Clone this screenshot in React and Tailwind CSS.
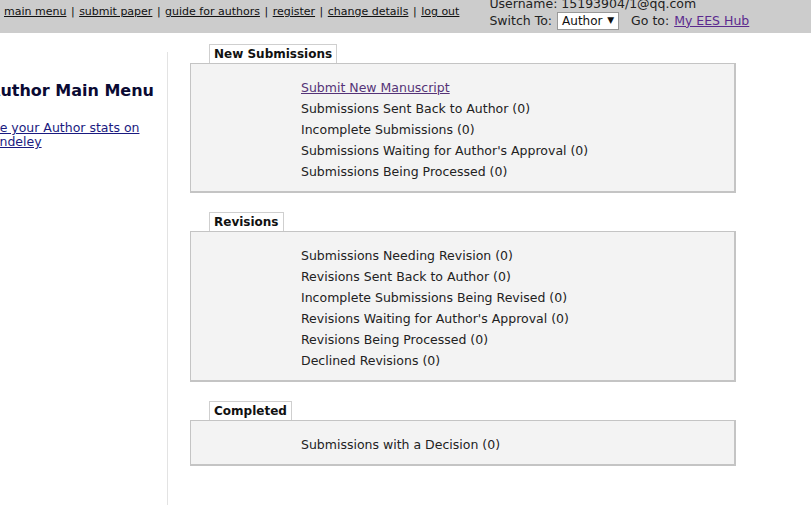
const NEW_SUBMISSIONS = [
  "Submissions Sent Back to Author (0)",
  "Incomplete Submissions (0)",
  "Submissions Waiting for Author's Approval (0)",
  "Submissions Being Processed (0)",
];

const REVISIONS = [
  "Submissions Needing Revision (0)",
  "Revisions Sent Back to Author (0)",
  "Incomplete Submissions Being Revised (0)",
  "Revisions Waiting for Author's Approval (0)",
  "Revisions Being Processed (0)",
  "Declined Revisions (0)",
];

const COMPLETED = ["Submissions with a Decision (0)"];

const NAV = ["main menu", "submit paper", "guide for authors", "register", "change details", "log out"];

function Panel({ title, children }) {
  return (
    <div className="mb-[19px]">
      <div className="ml-[19px] block h-[19px] w-fit border border-b-0 border-[#cfcfcf] bg-white px-[4px] text-[12px] font-bold leading-[18px] text-[#111]">
        {title}
      </div>
      <div className="border border-[#c4c4c4] border-b-2 border-r-2 bg-[#f3f3f3] pb-[9px] pl-[110px] pt-[13px]">
        {children}
      </div>
    </div>
  );
}

function Item({ children }) {
  return <div className="h-[21px] leading-[21px] text-[#222]">{children}</div>;
}

export default function App() {
  return (
    <div className="min-h-[520px] bg-white text-[12.5px] [font-family:'DejaVu_Sans',Verdana,sans-serif]">
      {/* top bar */}
      <div className="flex h-[33px] overflow-hidden bg-[#cccccc]">
        <div className="flex h-[25px] shrink-0 items-center whitespace-nowrap pl-[4px] text-[11px] text-[#111]">
          {NAV.map((n, i) => (
            <span key={n} className="whitespace-pre">
              <a className="underline">{n}</a>
              {i < NAV.length - 1 ? <span className="mx-px"> | </span> : ""}
            </span>
          ))}
        </div>
        <div className="ml-[30px] mt-[-4px] shrink-0 whitespace-nowrap text-[12.5px] text-[#222]">
          <div className="h-[15px] leading-[15px]">Username: 15193904/1@qq.com</div>
          <div className="flex h-[20px] items-center">
            <span>Switch To:</span>
            <div className="ml-[5px] flex h-[18px] w-[62px] items-center justify-between border border-[#999] bg-white px-[4px] text-[12px] text-[#111]">
              <span>Author</span>
              <span className="text-[9px]">▼</span>
            </div>
            <span className="ml-[12px]">Go to:</span>
            <a className="ml-[5px] text-[#5b2a8e] underline">My EES Hub</a>
          </div>
        </div>
      </div>

      <div className="flex">
        {/* sidebar */}
        <div className="mt-[19px] h-[453px] w-[168px] shrink-0 overflow-hidden border-r border-[#e3e3e3]">
          <div className="ml-[-12px] mt-[29px] whitespace-nowrap text-[16px] font-bold leading-[20px] text-[#0a0a33]">
            Author Main Menu
          </div>
          <div className="ml-[-16px] mt-[20px] leading-[14px] text-[#1a1a80]">
            <a className="block whitespace-nowrap underline">See your Author stats on</a>
            <a className="ml-[-3px] block whitespace-nowrap underline">Mendeley</a>
          </div>
        </div>

        {/* main */}
        <div className="ml-[22px] mt-[11px] w-[546px]">
          <Panel title="New Submissions">
            <Item>
              <a className="text-[#553377] underline">Submit New Manuscript</a>
            </Item>
            {NEW_SUBMISSIONS.map((t) => (
              <Item key={t}>{t}</Item>
            ))}
          </Panel>
          <Panel title="Revisions">
            {REVISIONS.map((t) => (
              <Item key={t}>{t}</Item>
            ))}
          </Panel>
          <Panel title="Completed">
            {COMPLETED.map((t) => (
              <Item key={t}>{t}</Item>
            ))}
          </Panel>
        </div>
      </div>
    </div>
  );
}
